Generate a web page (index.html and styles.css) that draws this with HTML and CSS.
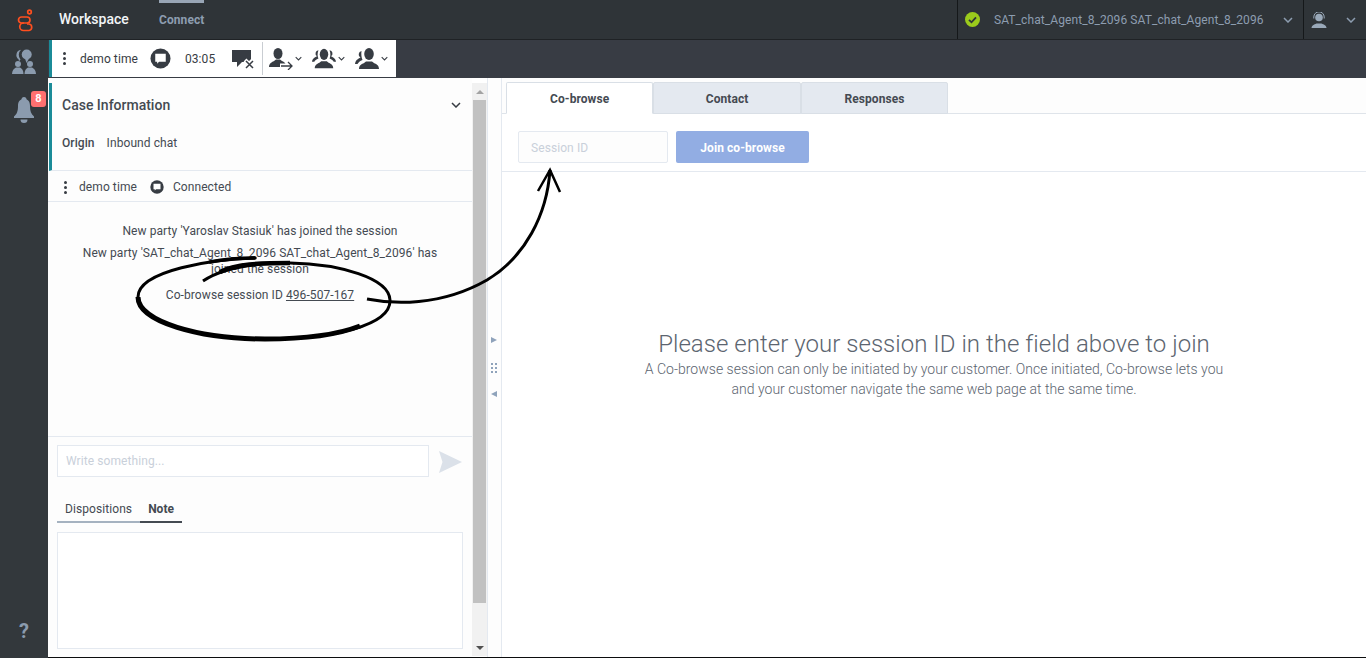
FILE: index.html
```html
<!DOCTYPE html>
<html lang="en">
<head>
  <meta charset="UTF-8">
  <title>Workspace</title>
  <link rel="stylesheet" href="styles.css">
</head>
<body>
  <svg class="defs" width="0" height="0">
    <symbol id="chev" viewBox="0 0 10 6">
      <path d="M1 1l4 4 4-4" fill="none" stroke="currentColor" stroke-width="1.500"/>
    </symbol>
    <symbol id="bubble" viewBox="0 0 22 22">
      <circle cx="11" cy="11" r="10.500" fill="currentColor"/>
      <path d="M5.500 6h11v8.500h-7l-2 2v-2h-2z" fill="#fff"/>
    </symbol>
  </svg>

  <header class="topbar">
    <div class="logo">
      <svg width="18" height="26" viewBox="0 0 18 26" fill="none" stroke="#ff4f1f" stroke-width="1.700">
        <circle cx="12.500" cy="3" r="1.800"/>
        <rect x="1.500" y="8" width="11.500" height="6" rx="3"/>
        <path d="M7 14H6.500a3.300 3.300 0 0 0 0 7.500h5.500a3.300 3.300 0 0 0 0-6.500H10"/>
      </svg>
    </div>
    <div class="brand">Workspace</div>
    <div class="nav-tab">Connect</div>
    <div class="topbar-right">
      <div class="status">
        <svg class="status-icon" width="15" height="15" viewBox="0 0 15 15">
          <circle cx="7.500" cy="7.500" r="7.500" fill="#9bcb1c"/>
          <path d="M4 7.800l2.500 2.500L11 5.300" fill="none" stroke="#2f3438" stroke-width="1.800"/>
        </svg>
        <span class="status-name">SAT_chat_Agent_8_2096 SAT_chat_Agent_8_2096</span>
        <svg class="chev-top" width="10" height="6"><use href="#chev"/></svg>
      </div>
      <div class="agent">
        <svg width="16" height="16" viewBox="0 0 16 16" fill="#9aa9b9">
          <circle cx="8" cy="5.500" r="3.800"/>
          <path d="M2.800 6.500V5a5.200 5.200 0 0 1 10.400 0v1.500" fill="none" stroke="#9aa9b9"/>
          <path d="M0.500 16c0-2.500 2.500-3.500 5-4.500h5c2.500 1 5 2 5 4.500z"/>
        </svg>
        <svg class="chev-top" width="10" height="6"><use href="#chev"/></svg>
      </div>
    </div>
  </header>

  <div class="app">
    <aside class="sidebar">
      <div class="side-item">
        <svg width="24" height="25" viewBox="0 0 24 25" fill="#8b9bae">
          <circle cx="14.700" cy="5.500" r="5"/>
          <path d="M13 9.500l1.500 4.500 2.500-4.500z"/>
          <path d="M9 .8a5.300 5.300 0 0 0-2.500 9.500l.5 2 1.500-1.800A7 7 0 0 1 9 .8z"/>
          <circle cx="6" cy="15" r="3"/>
          <circle cx="18" cy="15" r="3"/>
          <path d="M0 25c0-3.500 2-5.500 4-6.500h4c2 1 3.500 3 3.500 6.500zM12.500 25c0-3.500 1.500-5.500 3.500-6.500h4c2 1 4 3 4 6.500z"/>
        </svg>
      </div>
      <div class="side-item side-bell">
        <svg width="20" height="26" viewBox="0 0 20 26" fill="#8b9bae">
          <circle cx="10" cy="2.500" r="2.500"/>
          <path d="M10 2c4.500 0 6 3 6 7 0 5 1 8 4 10.500v1.500H0v-1.500C3 17 4 14 4 9c0-4 1.500-7 6-7z"/>
          <path d="M6.500 22.500h7a3.500 3.500 0 0 1-7 0z"/>
        </svg>
        <span class="badge">8</span>
      </div>
      <div class="help">?</div>
    </aside>

    <div class="work">
      <div class="call-row">
        <div class="call-bar">
          <span class="dots"><i></i><i></i><i></i></span>
          <span class="call-name">demo time</span>
          <svg class="call-chat" width="21" height="21"><use href="#bubble"/></svg>
          <span class="call-time">03:05</span>
          <svg class="call-end" width="23" height="20" viewBox="0 0 23 20">
            <path d="M0 1h19v12h-9l-5 5v-5H0z" fill="#373c43"/>
            <path d="M13 11l8 8M21 11l-8 8" stroke="#fff" stroke-width="4"/>
            <path d="M14 12l7 7M21 12l-7 7" stroke="#373c43" stroke-width="1.500"/>
          </svg>
          <span class="call-sep"></span>
          <span class="call-act act-transfer">
            <svg width="24" height="22" viewBox="0 0 24 22" fill="#373c43">
              <ellipse cx="9" cy="5.500" rx="4.500" ry="5.500"/>
              <path d="M0 19c0-3.500 3-5 5-6l2-1.500h4l2 1.500c1.500.7 2.500 1.300 3.500 2.500H11V19z"/>
              <path d="M12 18h11M19 14l4 4-4 4" fill="none" stroke="#373c43" stroke-width="1.300"/>
            </svg>
            <svg class="chev-call" width="7" height="5"><use href="#chev"/></svg>
          </span>
          <span class="call-act act-conf">
            <svg width="24" height="21" viewBox="0 0 26 21" fill="#373c43">
              <ellipse cx="13" cy="6" rx="4.600" ry="6"/>
              <path d="M3 21c0-4 3-5 5-6l2-1.500h6l2 1.500c2 1 5 2 5 6z"/>
              <path d="M7 1.500a3.500 3.500 0 0 0-1.500 6.500c-2 1-5 2-5.500 6h2.500c.8-1.500 2-2.500 4.500-3.500-1-2-1.500-5.500 0-9zM19 1.500a3.500 3.500 0 0 1 1.500 6.500c2 1 5 2 5.500 6h-2.500c-.8-1.500-2-2.500-4.500-3.500 1-2 1.500-5.500 0-9z"/>
            </svg>
            <svg class="chev-call" width="7" height="5"><use href="#chev"/></svg>
          </span>
          <span class="call-act act-consult">
            <svg width="24" height="21" viewBox="0 0 24 21" fill="#373c43">
              <ellipse cx="14" cy="6" rx="4.800" ry="6"/>
              <path d="M4 21c0-4 3-5 5-6l2-1.500h6l2 1.500c2 1 5 2 5 6z"/>
              <path d="M6.500 3a3.500 3.500 0 0 0-1 6.500C3 11 .5 12 0 16h2.500c.8-1.500 2.500-3 5-4-1-2.500-1.500-5.500-1-9z"/>
            </svg>
            <svg class="chev-call" width="7" height="5"><use href="#chev"/></svg>
          </span>
        </div>
      </div>

      <div class="panels">
        <section class="left-panel">
          <div class="left-body">
            <div class="case-info">
              <div class="case-head">
                <span class="case-title">Case Information</span>
                <svg class="chev-case" width="10" height="6"><use href="#chev"/></svg>
              </div>
              <div class="case-row"><b>Origin</b><span>Inbound chat</span></div>
            </div>
            <div class="party-row">
              <span class="dots dots-small"><i></i><i></i><i></i></span>
              <span class="party-name">demo time</span>
              <svg class="party-chat" width="14" height="14" viewBox="0 0 22 22"><use href="#bubble"/></svg>
              <span>Connected</span>
            </div>
            <div class="transcript">
              <p>New party 'Yaroslav Stasiuk' has joined the session</p>
              <p>New party 'SAT_chat_Agent_8_2096 SAT_chat_Agent_8_2096' has joined the session</p>
              <p class="session-line">Co-browse session ID <u>496-507-167</u></p>
            </div>
            <div class="composer">
              <input class="write" type="text" placeholder="Write something...">
              <svg class="send" width="23" height="22" viewBox="0 0 23 22"><path d="M0 0l23 11L0 22l3.500-11z" fill="#dbe1e9"/></svg>
            </div>
            <div class="note-tabs">
              <span class="note-tab">Dispositions</span>
              <span class="note-tab note-tab-on">Note</span>
            </div>
            <textarea class="note"></textarea>
          </div>
          <div class="scrollbar">
            <div class="scroll-btn"><span class="tri-up"></span></div>
            <div class="scroll-thumb"></div>
            <div class="scroll-btn scroll-btn-end"><span class="tri-down"></span></div>
          </div>
        </section>

        <div class="splitter">
          <span class="tri-right"></span>
          <span class="grip"><i></i><i></i><i></i><i></i><i></i><i></i></span>
          <span class="tri-left"></span>
        </div>

        <section class="right-panel">
          <nav class="tabs">
            <span class="tab tab-on">Co-browse</span>
            <span class="tab">Contact</span>
            <span class="tab">Responses</span>
          </nav>
          <div class="join-row">
            <input class="session-id" type="text" placeholder="Session ID">
            <button class="join" type="button">Join co-browse</button>
          </div>
          <div class="hint">
            <h1>Please enter your session ID in the field above to join</h1>
            <p>A Co-browse session can only be initiated by your customer. Once initiated, Co-browse lets you and your customer navigate the same web page at the same time.</p>
          </div>
        </section>
      </div>
    </div>
  </div>

  <!-- hand drawn note over the screenshot: one spiral round the id, then the arrow -->
  <svg class="ink" width="1366" height="658" viewBox="0 0 1366 658" fill="none" stroke="#000">
    <path d="M255 258C215 259 138 270 138 297c0 25 62 42 127 42 70 0 126-14 125-39-1-22-50-36-100-37-30 0-65 3-87 18" stroke-width="3"/>
    <path d="M138 297c0 25 62 42 127 42 40 0 72-4 95-13" stroke-width="5"/>
    <path d="M255 258c-15 0-30 1-45 4" stroke-width="3.500" stroke-linecap="round"/>
    <path d="M290 263c-30 0-55 1-70 9" stroke-width="4.500"/>
    <path d="M367 299c25 5 73 8 120-19 38-23 60-65 63-110" stroke-width="3"/>
    <path d="M538 191l12-21 10 22" stroke-width="2.500"/>
  </svg>
</body>
</html>
```

FILE: styles.css
```css
* {
  box-sizing: border-box;
}
html, body {
  margin: 0;
  height: 658px;
  overflow: hidden;
}
body {
  position: relative;
  font-family: Roboto, "Liberation Sans", sans-serif;
  font-size: 12px;
  letter-spacing: .08px;
  color: #444a52;
  background: #383c44;
}
input, textarea, button {
  font-family: inherit;
  font-size: 12px;
  letter-spacing: inherit;
}
.defs {
  position: absolute;
}

/* top bar */
.topbar {
  display: flex;
  align-items: center;
  height: 40px;
  background: #2f3438;
  border-bottom: 1px solid #1f2225;
}
.logo {
  display: flex;
  width: 59px;
  padding-left: 17px;
  padding-top: 4px;
}
.brand {
  width: 100px;
  padding-bottom: 2px;
  font-size: 14px;
  font-weight: 500;
  letter-spacing: 0;
  color: #f2f4f7;
}
.nav-tab {
  align-self: stretch;
  display: flex;
  align-items: center;
  border-top: 3px solid #98a5b5;
  padding-bottom: 3px;
  font-weight: 700;
  color: #8d9db0;
}
.topbar-right {
  display: flex;
  align-self: stretch;
  margin-left: auto;
}
.status {
  display: flex;
  align-items: center;
  width: 346px;
  padding-left: 7px;
  border-left: 1px solid #15181a;
}
.status-icon {
  margin-right: 14px;
}
.status-name {
  width: 289px;
  color: #8d9db0;
}
.chev-top {
  color: #8d9db0;
}
.agent {
  display: flex;
  align-items: center;
  width: 63px;
  padding-left: 7px;
  border-left: 1px solid #15181a;
}
.agent .chev-top {
  margin-left: 19px;
}

/* app frame */
.app {
  display: flex;
  height: 618px;
}
.sidebar {
  display: flex;
  flex-direction: column;
  align-items: center;
  width: 48px;
  background: #33383c;
}
.side-item {
  display: flex;
  justify-content: center;
  width: 100%;
  padding-top: 9px;
  height: 49px;
}
.side-bell {
  position: relative;
  padding-top: 8px;
}
.badge {
  position: absolute;
  left: 31px;
  top: 2px;
  width: 15px;
  height: 16px;
  border-radius: 3px;
  background: #ff7070;
  color: #fff;
  font-size: 11px;
  font-weight: 700;
  line-height: 16px;
  text-align: center;
}
.help {
  margin-top: auto;
  padding-bottom: 15px;
  font-size: 20px;
  font-weight: 700;
  color: #8b9bae;
}
.work {
  display: flex;
  flex-direction: column;
  flex: 1;
  min-width: 0;
}

/* call toolbar */
.call-row {
  height: 38px;
  flex: none;
  padding-left: 1px;
}
.call-bar {
  display: flex;
  align-items: center;
  width: 347px;
  height: 37px;
  background: #fff;
  border-left: 3px solid #1b8b98;
  color: #373c43;
}
.dots {
  display: flex;
  flex-direction: column;
  gap: 2px;
  width: 4px;
  margin-left: 11px;
}
.dots i {
  width: 3px;
  height: 3px;
  border-radius: 50%;
  background: #373c43;
}
.call-name {
  margin-left: 13px;
}
.call-chat {
  margin-left: 12px;
  color: #373c43;
}
.call-time {
  margin-left: 14px;
}
.call-end {
  margin-left: 17px;
}
.call-sep {
  width: 1px;
  height: 33px;
  margin-left: 7px;
  background: #c9cdd2;
}
.call-act {
  display: flex;
  align-items: center;
  gap: 2px;
}
.act-transfer {
  margin-left: 6px;
}
.act-conf {
  margin-left: 10px;
}
.act-consult {
  margin-left: 10px;
}
.chev-call {
  color: #373c43;
}

/* panels */
.panels {
  display: flex;
  flex: 1;
  min-height: 0;
  border-bottom: 1px solid #0c0d0e;
  background: #fff;
}
.left-panel {
  display: flex;
  width: 439px;
  flex: none;
}
.left-body {
  display: flex;
  flex-direction: column;
  width: 424px;
  padding-top: 5px;
  background: #fdfdfd;
}
.case-info {
  height: 88px;
  margin-left: 1px;
  padding: 0 11px 0 10px;
  border-left: 3px solid #1b8b98;
  border-bottom: 1px solid #e4e9f0;
}
.case-head {
  display: flex;
  align-items: center;
  justify-content: space-between;
  height: 44px;
}
.case-title {
  font-size: 14px;
  font-weight: 500;
  letter-spacing: 0;
}
.chev-case {
  color: #373c43;
}
.case-row {
  display: flex;
  gap: 12px;
  margin-top: 8px;
  line-height: 16px;
}
.case-row b {
  font-weight: 500;
}
.party-row {
  display: flex;
  align-items: center;
  height: 31px;
  padding: 2px 0 0 16px;
  border-bottom: 1px solid #e4e9f0;
}
.dots-small {
  margin-left: 0;
}
.party-name {
  margin-left: 11px;
}
.party-chat {
  margin: 0 9px 0 13px;
  color: #373c43;
}
.transcript {
  height: 235px;
  padding: 21px 30px 0;
  border-bottom: 1px solid #e4e9f0;
  text-align: center;
  line-height: 16px;
}
.transcript p {
  margin: 0 0 6px;
}
.transcript .session-line {
  margin-top: 10px;
}
.composer {
  display: flex;
  align-items: center;
  gap: 10px;
  padding: 8px 0 0 9px;
}
.write {
  width: 372px;
  height: 32px;
  padding: 0 8px;
  border: 1px solid #e4e9f0;
  background: #fff;
}
.write::placeholder, .session-id::placeholder {
  color: #c9d0da;
}
.send {
  margin-top: 1px;
}
.note-tabs {
  display: flex;
  height: 23px;
  margin: 23px 0 0 9px;
}
.note-tab {
  padding: 0 8px;
  border-bottom: 2px solid #a5b2c0;
  line-height: 18px;
}
.note-tab-on {
  border-bottom-color: #444a52;
  font-weight: 700;
  letter-spacing: 0;
}
.note {
  display: block;
  width: 406px;
  height: 117px;
  margin: 9px 0 0 9px;
  border: 1px solid #e4e9f0;
  background: #fff;
  resize: none;
}
.scrollbar {
  display: flex;
  flex-direction: column;
  width: 15px;
  margin-top: 5px;
  margin-bottom: 1px;
  padding: 0 1px;
  background: #f1f1f1;
}
.scroll-btn {
  display: flex;
  align-items: center;
  justify-content: center;
  height: 17px;
  flex: none;
}
.scroll-btn-end {
  margin-top: auto;
}
.tri-up {
  border: 4px solid transparent;
  border-top: 0;
  border-bottom: 4px solid #a3a3a3;
}
.tri-down {
  border: 4px solid transparent;
  border-bottom: 0;
  border-top: 4px solid #505050;
}
.scroll-thumb {
  height: 503px;
  background: #c1c1c1;
}
.splitter {
  position: relative;
  width: 15px;
  flex: none;
  border-left: 1px solid #e4e9f0;
  border-right: 1px solid #e4e9f0;
  background: #fdfdfd;
}
.tri-right, .tri-left, .grip {
  position: absolute;
}
.tri-right {
  left: 3px;
  top: 259px;
  border: 3px solid transparent;
  border-right: 0;
  border-left: 6px solid #8fa3bb;
}
.tri-left {
  left: 3px;
  top: 313px;
  border: 3px solid transparent;
  border-left: 0;
  border-right: 6px solid #8fa3bb;
}
.grip {
  left: 3px;
  top: 285px;
  display: grid;
  grid-template-columns: 2px 2px;
  gap: 2px;
}
.grip i {
  width: 2px;
  height: 2px;
  background: #8fa3bb;
}
.right-panel {
  flex: 1;
  min-width: 0;
  background: #fff;
}
.tabs {
  display: flex;
  height: 36px;
  padding: 4px 0 0 4px;
  border-bottom: 1px solid #dfe4ea;
  background: #fdfdfd;
}
.tab {
  width: 147.4px;
  height: 32px;
  border: 1px solid #d9dfe6;
  border-radius: 2px 2px 0 0;
  background: #e4e9f0;
  font-weight: 700;
  line-height: 33px;
  text-align: center;
}
.tab-on {
  background: #fff;
  border-bottom-color: #fff;
}
.join-row {
  display: flex;
  gap: 8px;
  height: 58px;
  padding: 17px 0 0 16px;
  border-bottom: 1px solid #e4e9f0;
}
.session-id {
  width: 150px;
  height: 32px;
  padding: 1px 12px 0;
  border: 1px solid #e4e9f0;
  border-radius: 2px;
  background: #fdfdfd;
}
.join {
  width: 133px;
  height: 32px;
  padding: 1px 0 0;
  border: 0;
  border-radius: 2px;
  background: #92ade3;
  color: #fff;
  font-weight: 700;
}
.hint {
  width: 600px;
  margin: 157px auto 0;
  text-align: center;
  color: #5c6570;
}
.hint h1 {
  margin: 0;
  font-size: 24px;
  font-weight: 300;
  letter-spacing: .04px;
  line-height: 30px;
}
.hint p {
  margin: 0;
  font-size: 14px;
  font-weight: 300;
  letter-spacing: .02px;
  line-height: 20px;
}

/* annotation drawn on top of the page */
.ink {
  position: absolute;
  left: 0;
  top: 0;
  pointer-events: none;
}
```
